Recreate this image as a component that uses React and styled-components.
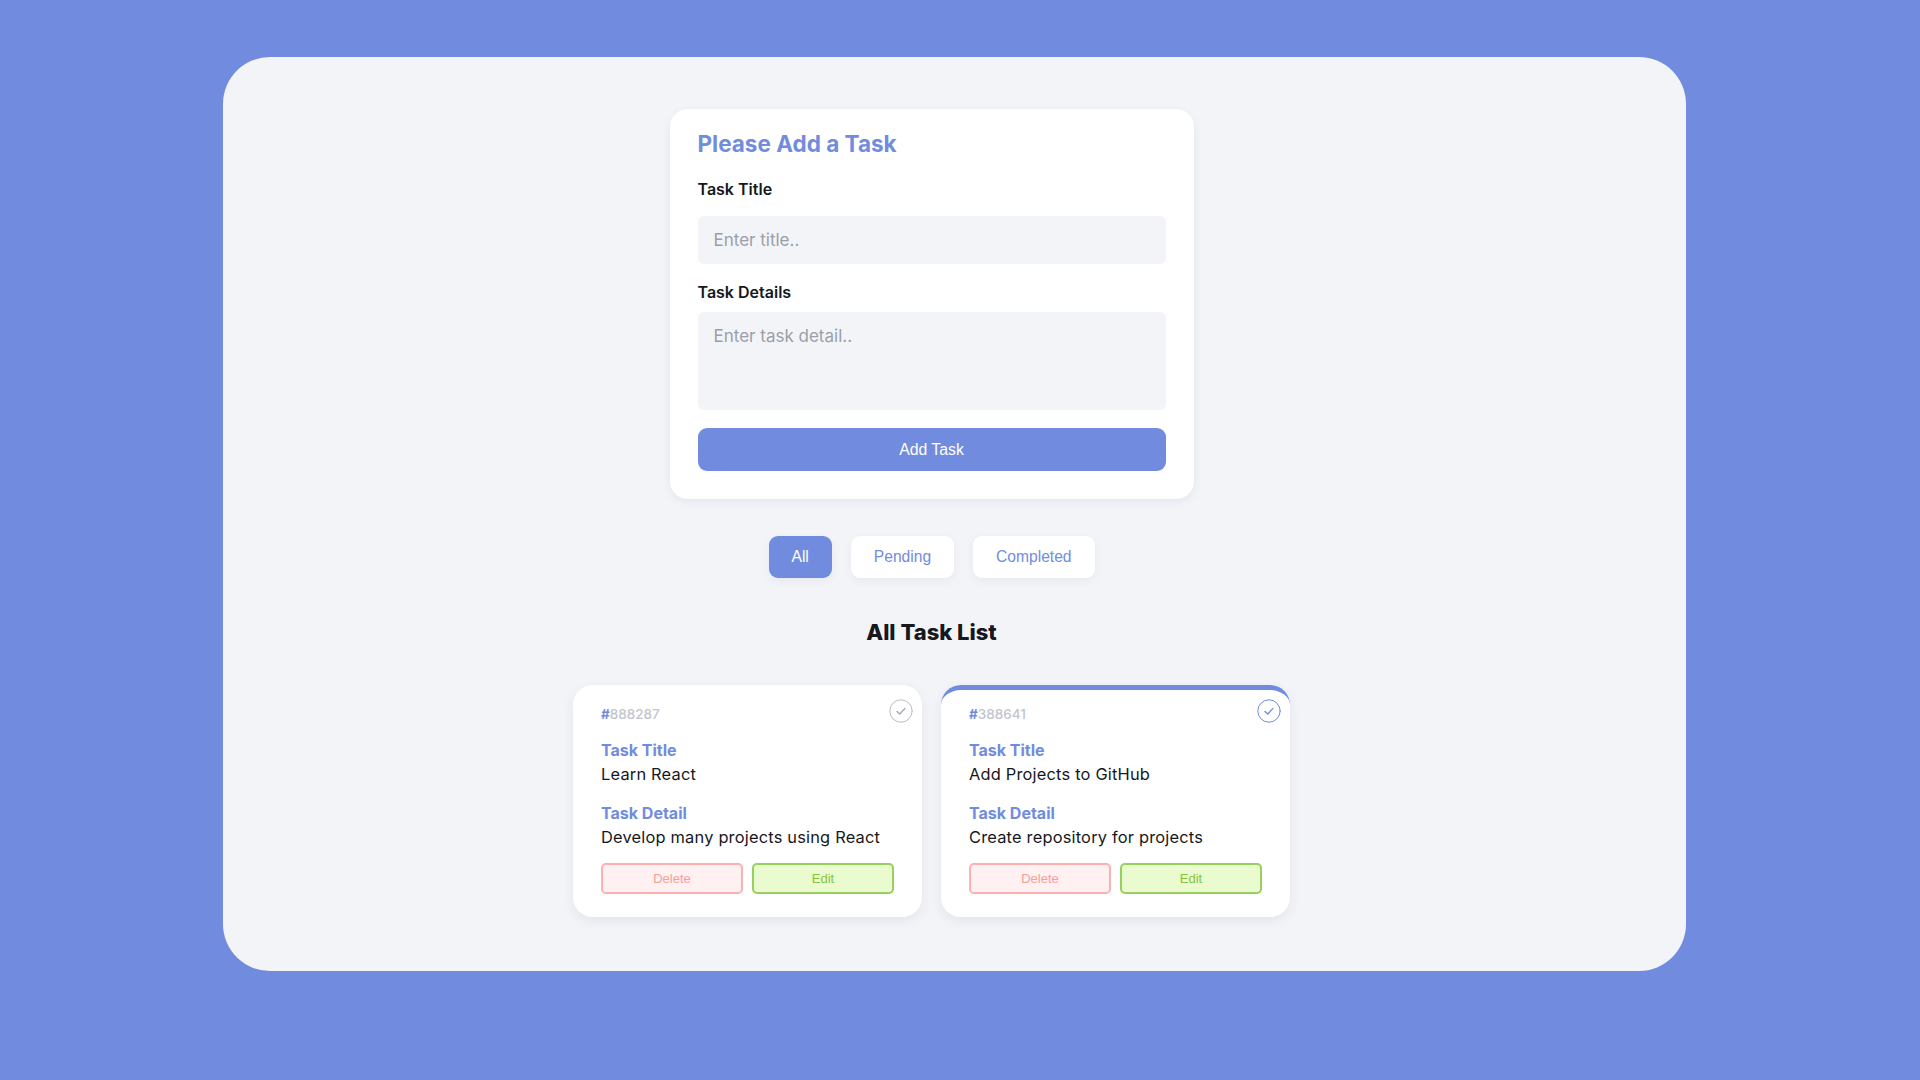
import React from "react";
import styled, { createGlobalStyle } from "styled-components";

const BLUE = "#718cde";
const SANS = '"Inter", "Noto Sans", sans-serif';
const ARIAL = '"Liberation Sans", Arial, sans-serif';

const Global = createGlobalStyle`
  * { box-sizing: border-box; }
  html, body { margin: 0; height: 100%; background: ${BLUE}; font-family: ${SANS}; }
`;

const Page = styled.div`
  height: 1080px;
  padding: 57px 234px 109px 223px;
`;
const Panel = styled.main`
  height: 914px;
  background: #f2f4f8;
  border-radius: 47px;
  padding: 52px 46px 0 0;
  display: flex;
  flex-direction: column;
  align-items: center;
`;
const FormCard = styled.form`
  width: 524px;
  height: 390px;
  background: #fff;
  border-radius: 18px;
  padding: 20px 28px 28px;
  box-shadow: 0 3px 10px rgba(60, 70, 110, 0.07);
  display: flex;
  flex-direction: column;
`;
const FormTitle = styled.h2`
  margin: 0 0 18px;
  font-size: 22.5px;
  line-height: 30px;
  font-weight: 700;
  color: ${BLUE};
`;
const FieldLabel = styled.label`
  display: block;
  font-size: 16px;
  font-weight: 600;
  line-height: 24px;
  color: #16181d;
  margin-top: ${(p) => p.$mt || 0}px;
  margin-bottom: ${(p) => p.$mb || 0}px;
`;
const fieldCss = `
  display: block;
  flex: none;
  width: 100%;
  border: 0;
  outline: 0;
  background: #f2f4f8;
  border-radius: 6px;
  font-family: ${SANS};
  font-size: 17px;
  color: #16181d;
  padding: 0 16px;
  &::placeholder { color: #9a9fa9; opacity: 1; }
`;
const TextInput = styled.input`
  ${fieldCss}
  height: 48px;
`;
const TextArea = styled.textarea`
  ${fieldCss}
  height: 98px;
  padding-top: 14px;
  line-height: 20px;
  resize: none;
`;
const SubmitButton = styled.button`
  flex: none;
  margin-top: 18px;
  height: 43px;
  width: 100%;
  border: 0;
  border-radius: 9px;
  background: ${BLUE};
  color: #fff;
  font-family: ${ARIAL};
  font-size: 15.8px;
`;
const Filters = styled.nav`
  display: flex;
  gap: 19px;
  margin-top: 37px;
`;
const FilterButton = styled.button`
  height: 42px;
  padding: 0 23px;
  border: 0;
  border-radius: 9px;
  background: ${(p) => (p.$active ? BLUE : "#fff")};
  color: ${(p) => (p.$active ? "#fff" : BLUE)};
  font-family: ${ARIAL};
  font-size: 15.6px;
  box-shadow: 0 3px 8px rgba(60, 70, 110, 0.06);
`;
const ListTitle = styled.h1`
  margin: 38px 0 37px;
  font-size: 22px;
  line-height: 32px;
  font-weight: 800;
  color: #16181d;
`;
const CardRow = styled.section`
  display: flex;
  gap: 19px;
`;
const TaskCard = styled.article`
  position: relative;
  width: 349px;
  height: 232px;
  background: #fff;
  border-radius: 20px;
  border-top: 5px solid ${(p) => (p.$done ? BLUE : "#fff")};
  padding: 15px 28px 23px;
  box-shadow: 0 4px 12px rgba(60, 70, 110, 0.08);
`;
const TaskCode = styled.div`
  font-size: 13.5px;
  line-height: 18px;
  font-weight: 500;
  color: #c2c5cd;
  & > span { color: ${BLUE}; font-weight: 700; }
`;
const TaskLabel = styled.div`
  margin-top: 16px;
  font-size: 16px;
  line-height: 22px;
  font-weight: 700;
  color: ${BLUE};
`;
const TaskValue = styled.div`
  margin-top: 1px;
  font-size: 16.4px;
  letter-spacing: 0.2px;
  line-height: 24px;
  color: #16181d;
  white-space: nowrap;
`;
const TaskActions = styled.div`
  display: flex;
  gap: 9px;
  margin-top: 14px;
`;
const ActionButton = styled.button`
  flex: 1;
  height: 31px;
  padding: 0;
  border-radius: 5px;
  font-family: ${ARIAL};
  font-size: 13px;
  border: 2px solid ${(p) => (p.$kind === "edit" ? "#97d05a" : "#fdb0b0")};
  background: ${(p) => (p.$kind === "edit" ? "#e9fbcf" : "#fff1f1")};
  color: ${(p) => (p.$kind === "edit" ? "#84c441" : "#fb9c9c")};
`;
const CheckBadge = styled.svg`
  position: absolute;
  top: 9px;
  right: 9px;
  width: 24px;
  height: 24px;
  fill: none;
  stroke-linecap: round;
  stroke-linejoin: round;
`;

function Check({ done }) {
  return (
    <CheckBadge viewBox="0 0 24 24">
      <circle cx="12" cy="12" r="11.2" stroke={done ? BLUE : "#b9bdc9"} strokeWidth="1" />
      <path d="M8 12.4l2.8 2.6L16 9.4" stroke={done ? BLUE : "#a2a6b0"} strokeWidth="1.3" />
    </CheckBadge>
  );
}

const tasks = [
  { code: "888287", title: "Learn React", detail: "Develop many projects using React", done: false },
  { code: "388641", title: "Add Projects to GitHub", detail: "Create repository for projects", done: true },
];

export default function App() {
  return (
    <Page>
      <Global />
      <Panel>
        <FormCard onSubmit={(e) => e.preventDefault()}>
          <FormTitle>Please Add a Task</FormTitle>
          <FieldLabel htmlFor="t" $mb={15}>Task Title</FieldLabel>
          <TextInput id="t" placeholder="Enter title.." />
          <FieldLabel htmlFor="d" $mt={16} $mb={8}>Task Details</FieldLabel>
          <TextArea id="d" placeholder="Enter task detail.." />
          <SubmitButton>Add Task</SubmitButton>
        </FormCard>
        <Filters>
          <FilterButton $active>All</FilterButton>
          <FilterButton>Pending</FilterButton>
          <FilterButton>Completed</FilterButton>
        </Filters>
        <ListTitle>All Task List</ListTitle>
        <CardRow>
          {tasks.map((t) => (
            <TaskCard key={t.code} $done={t.done}>
              <Check done={t.done} />
              <TaskCode><span>#</span>{t.code}</TaskCode>
              <TaskLabel>Task Title</TaskLabel>
              <TaskValue>{t.title}</TaskValue>
              <TaskLabel>Task Detail</TaskLabel>
              <TaskValue>{t.detail}</TaskValue>
              <TaskActions>
                <ActionButton>Delete</ActionButton>
                <ActionButton $kind="edit">Edit</ActionButton>
              </TaskActions>
            </TaskCard>
          ))}
        </CardRow>
      </Panel>
    </Page>
  );
}
